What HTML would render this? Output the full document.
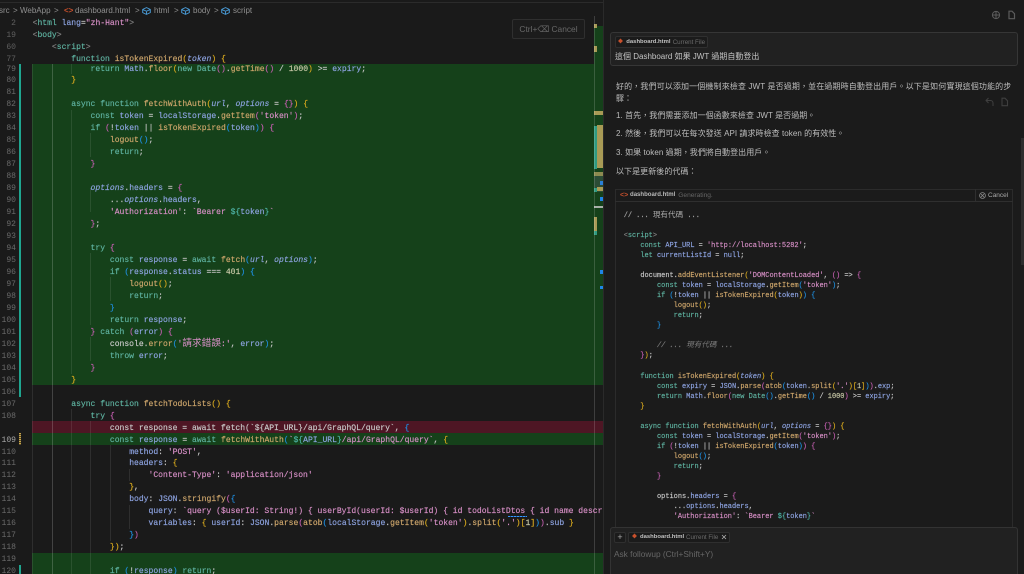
<!DOCTYPE html>
<html lang="zh-Hant"><head><meta charset="utf-8"><title>Editor</title>
<style>
html,body{margin:0;padding:0;background:#1a1a1a}
#app{position:relative;width:1024px;height:574px;overflow:hidden;background:#1a1a1a;filter:blur(.35px);font-family:"Liberation Sans","Noto Sans CJK TC",sans-serif}
.a{position:absolute}
pre{margin:0;position:absolute;font-family:"Liberation Mono","Noto Sans CJK TC",monospace;color:#c8c8c8;white-space:pre;-webkit-text-stroke:.15px}
.main{font-size:8.05px;line-height:11.97px}
.chat{font-size:6.95px;line-height:10.07px}
.nums{left:0;width:16px;text-align:right;color:#6a6a6a;-webkit-text-stroke:0}
.k{color:#5fb3a1}.v{color:#8ea4e2}.f{color:#cfa76c}.s{color:#d78fc6}.c{color:#7d7d7d;font-style:italic}.g{color:#808080}.t{color:#4fb5a8}
.i{font-style:italic}.y{color:#d9aa1e}.m{color:#c45fb0}.b{color:#1f8fe0}.n{color:#c9c9a8}.w{color:#c9c9c9}
.cj{font-size:9.66px;line-height:0;-webkit-text-stroke:0}.cc{font-size:7.6px;line-height:0;-webkit-text-stroke:0}
.chip{border:1px solid #2f2f2f;background:#1b1b1b;border-radius:2px;box-sizing:border-box}
.p{position:absolute;left:616px;font-size:8px;line-height:11.5px;color:#bcbcbc;white-space:nowrap;letter-spacing:.06px}
.gd{position:absolute;width:1px;background:rgba(255,255,255,.09)}
.mm{position:absolute}
</style></head><body><div id="app">

<!-- tabs edge -->
<div class="a" style="left:0;top:2px;width:603px;height:1px;background:#2b2b2b"></div>

<!-- breadcrumb -->
<div class="a" style="left:0;top:4.5px;height:11px;font-size:8px;line-height:11px;color:#8f8f8f;white-space:nowrap;width:300px">
<span class="a" style="left:-1px">src</span><span class="a" style="left:13px">&gt;</span><span class="a" style="left:20px">WebApp</span><span class="a" style="left:54px">&gt;</span><span class="a" style="left:64px;color:#c8502c;font-weight:bold">&lt;&gt;</span><span class="a" style="left:75px">dashboard.html</span><span class="a" style="left:135px">&gt;</span>
<svg class="a" style="left:142px;top:2px" width="9" height="8" viewBox="0 0 9 8" fill="none" stroke="#4b9fdc" stroke-width=".9"><path d="M.7 2.4 4.5.6l3.8 1.8v3.2L4.5 7.4.7 5.6zM.7 2.4l3.8 1.9 3.8-1.9M4.5 4.3v3"/></svg>
<span class="a" style="left:154px">html</span><span class="a" style="left:174px">&gt;</span>
<svg class="a" style="left:181px;top:2px" width="9" height="8" viewBox="0 0 9 8" fill="none" stroke="#4b9fdc" stroke-width=".9"><path d="M.7 2.4 4.5.6l3.8 1.8v3.2L4.5 7.4.7 5.6zM.7 2.4l3.8 1.9 3.8-1.9M4.5 4.3v3"/></svg>
<span class="a" style="left:193px">body</span><span class="a" style="left:214px">&gt;</span>
<svg class="a" style="left:221px;top:2px" width="9" height="8" viewBox="0 0 9 8" fill="none" stroke="#4b9fdc" stroke-width=".9"><path d="M.7 2.4 4.5.6l3.8 1.8v3.2L4.5 7.4.7 5.6zM.7 2.4l3.8 1.9 3.8-1.9M4.5 4.3v3"/></svg>
<span class="a" style="left:233px">script</span>
</div>

<!-- diff backgrounds -->
<div class="a" style="left:32px;top:64px;width:571px;height:321px;background:#15411a"></div>
<div class="a" style="left:32px;top:421px;width:571px;height:12px;background:#4e1624"></div>
<div class="a" style="left:32px;top:433px;width:571px;height:12px;background:#15411a"></div>
<div class="a" style="left:32px;top:553px;width:571px;height:21px;background:#15411a"></div>

<!-- gutter marks -->
<div class="a" style="left:19px;top:64px;width:2px;height:333px;background:#1fa58f"></div>
<div class="a" style="left:19px;top:433px;width:2px;height:12px;background:repeating-linear-gradient(#c9a64e 0 1px,#5a4d26 1px 2px)"></div>
<div class="a" style="left:19px;top:565px;width:2px;height:9px;background:#1fa58f"></div>

<!-- indent guides -->
<div class="gd" style="left:32px;top:64px;height:510px"></div>
<div class="gd" style="left:52px;top:64px;height:510px;background:rgba(255,255,255,.18)"></div>
<div class="gd" style="left:71px;top:64px;height:10px"></div>
<div class="gd" style="left:71px;top:110px;height:264px"></div>
<div class="gd" style="left:71px;top:409px;height:165px"></div>
<div class="gd" style="left:90px;top:133px;height:24px"></div>
<div class="gd" style="left:90px;top:188px;height:24px"></div>
<div class="gd" style="left:90px;top:253px;height:72px"></div>
<div class="gd" style="left:90px;top:337px;height:24px"></div>
<div class="gd" style="left:90px;top:421px;height:153px"></div>
<div class="gd" style="left:110px;top:277px;height:24px"></div>
<div class="gd" style="left:110px;top:445px;height:96px"></div>
<div class="gd" style="left:129px;top:469px;height:12px"></div>
<div class="gd" style="left:129px;top:505px;height:24px"></div>

<!-- minimap -->
<div class="mm" style="left:594px;top:16px;width:9px;height:558px;background:#1a1a1a"></div>
<div class="mm" style="left:594px;top:26px;width:9px;height:359px;background:#15411a"></div>
<div class="mm" style="left:594px;top:421px;width:9px;height:12px;background:#4e1624"></div>
<div class="mm" style="left:594px;top:433px;width:9px;height:12px;background:#15411a"></div>
<div class="mm" style="left:594px;top:553px;width:9px;height:21px;background:#15411a"></div>
<div class="mm" style="left:594px;top:24px;width:3px;height:4px;background:#a89a55"></div>
<div class="mm" style="left:594px;top:46px;width:3px;height:6px;background:#a89a55"></div>
<div class="mm" style="left:594px;top:111px;width:9px;height:4px;background:#a89a55"></div>
<div class="mm" style="left:594px;top:126px;width:3px;height:43px;background:#2f9a80"></div>
<div class="mm" style="left:597px;top:125px;width:6px;height:43px;background:#a89a55"></div>
<div class="mm" style="left:594px;top:172px;width:9px;height:4px;background:#8d8a50"></div>
<div class="mm" style="left:594px;top:176px;width:9px;height:16px;background:#2c4c36"></div>
<div class="mm" style="left:600px;top:181px;width:3px;height:4px;background:#2a80d8"></div>
<div class="mm" style="left:597px;top:187px;width:6px;height:4px;background:#a89a55"></div>
<div class="mm" style="left:594px;top:188px;width:3px;height:4px;background:#2f9a80"></div>
<div class="mm" style="left:600px;top:197px;width:3px;height:4px;background:#1f86e8"></div>
<div class="mm" style="left:594px;top:206px;width:9px;height:1.5px;background:#a8b0a8"></div>
<div class="mm" style="left:594px;top:217px;width:3px;height:14px;background:#a89a55"></div>
<div class="mm" style="left:594px;top:231px;width:3px;height:4px;background:#2f9a80"></div>
<div class="mm" style="left:600px;top:270px;width:3px;height:4px;background:#1f86e8"></div>
<div class="mm" style="left:600px;top:286px;width:3px;height:3px;background:#1f86e8"></div>
<div class="a" style="left:594px;top:16px;width:1px;height:558px;background:rgba(255,255,255,.16)"></div>

<!-- sticky -->
<pre class="main nums" style="top:18px;color:#5f5f5f">2
19
60
77</pre>
<pre class="main" style="left:32.6px;top:18px"><span class="g">&lt;</span><span class="k">html</span> <span class="v">lang</span>=<span class="s">"zh-Hant"</span><span class="g">&gt;</span>
<span class="g">&lt;</span><span class="k">body</span><span class="g">&gt;</span>
    <span class="g">&lt;</span><span class="k">script</span><span class="g">&gt;</span>
        <span class="k">function</span> <span class="f">isTokenExpired</span><span class="y">(</span><span class="v i">token</span><span class="y">)</span> <span class="y">{</span></pre>

<!-- line numbers -->
<pre class="main nums" style="top:63.5px">79
80
81
82
83
84
85
86
87
88
89
90
91
92
93
94
95
96
97
98
99
100
101
102
103
104
105
106
107
108

<span style="color:#a8a8a8">109</span>
110
111
112
113
114
115
116
117
118
119
120</pre>

<!-- code -->
<div class="a" style="left:32px;top:64px;width:571px;height:510px;overflow:hidden">
<pre class="main" style="left:.6px;top:-.5px">            <span class="k">return</span> <span class="v">Math</span>.<span class="f">floor</span><span class="y">(</span><span class="k">new</span> <span class="k">Date</span><span class="m">()</span>.<span class="f">getTime</span><span class="m">()</span> / <span class="n">1000</span><span class="y">)</span> &gt;= <span class="v">expiry</span>;
        <span class="y">}</span>

        <span class="k">async</span> <span class="k">function</span> <span class="f">fetchWithAuth</span><span class="y">(</span><span class="v i">url</span>, <span class="v i">options</span> = <span class="m">{}</span><span class="y">)</span> <span class="y">{</span>
            <span class="k">const</span> <span class="v">token</span> = <span class="v">localStorage</span>.<span class="f">getItem</span><span class="m">(</span><span class="s">'token'</span><span class="m">)</span>;
            <span class="k">if</span> <span class="m">(</span>!<span class="v">token</span> || <span class="f">isTokenExpired</span><span class="b">(</span><span class="v">token</span><span class="b">)</span><span class="m">)</span> <span class="m">{</span>
                <span class="f">logout</span><span class="b">()</span>;
                <span class="k">return</span>;
            <span class="m">}</span>

            <span class="v i">options</span>.<span class="v">headers</span> = <span class="m">{</span>
                ...<span class="v i">options</span>.<span class="v">headers</span>,
                <span class="s">'Authorization'</span>: <span class="s">`Bearer </span><span class="t">${</span><span class="v">token</span><span class="t">}</span><span class="s">`</span>
            <span class="m">}</span>;

            <span class="k">try</span> <span class="m">{</span>
                <span class="k">const</span> <span class="v">response</span> = <span class="k">await</span> <span class="f">fetch</span><span class="b">(</span><span class="v i">url</span>, <span class="v i">options</span><span class="b">)</span>;
                <span class="k">if</span> <span class="b">(</span><span class="v">response</span>.<span class="v">status</span> === <span class="n">401</span><span class="b">)</span> <span class="b">{</span>
                    <span class="f">logout</span><span class="y">()</span>;
                    <span class="k">return</span>;
                <span class="b">}</span>
                <span class="k">return</span> <span class="v">response</span>;
            <span class="m">}</span> <span class="k">catch</span> <span class="m">(</span><span class="v">error</span><span class="m">)</span> <span class="m">{</span>
                <span class="w">console</span>.<span class="f">error</span><span class="b">(</span><span class="s">'<span class="cj">請求錯誤</span>:'</span>, <span class="v">error</span><span class="b">)</span>;
                <span class="k">throw</span> <span class="v">error</span>;
            <span class="m">}</span>
        <span class="y">}</span>

        <span class="k">async</span> <span class="k">function</span> <span class="f">fetchTodoLists</span><span class="y">()</span> <span class="y">{</span>
            <span class="k">try</span> <span class="m">{</span>
                <span class="w">const response = await fetch(`${API_URL}/api/GraphQL/query`, </span><span class="b">{</span>
                <span class="k">const</span> <span class="v">response</span> = <span class="k">await</span> <span class="f">fetchWithAuth</span><span class="b">(</span><span class="s">`</span><span class="t">${</span><span class="v">API_URL</span><span class="t">}</span><span class="s">/api/GraphQL/query`</span>, <span class="y">{</span>
                    <span class="v">method</span>: <span class="s">'POST'</span>,
                    <span class="v">headers</span>: <span class="y">{</span>
                        <span class="s">'Content-Type'</span>: <span class="s">'application/json'</span>
                    <span class="y">}</span>,
                    <span class="v">body</span>: <span class="v">JSON</span>.<span class="f">stringify</span><span class="m">(</span><span class="b">{</span>
                        <span class="v">query</span>: <span class="s">`query ($userId: String!) { userById(userId: $userId) { id todoListDtos { id name descr</span>
                        <span class="v">variables</span>: <span class="y">{</span> <span class="v">userId</span>: <span class="v">JSON</span>.<span class="f">parse</span><span class="m">(</span><span class="f">atob</span><span class="b">(</span><span class="v">localStorage</span>.<span class="f">getItem</span><span class="y">(</span><span class="s">'token'</span><span class="y">)</span>.<span class="f">split</span><span class="y">(</span><span class="s">'.'</span><span class="y">)</span><span class="y">[</span><span class="n">1</span><span class="y">]</span><span class="b">)</span><span class="m">)</span>.<span class="v">sub</span> <span class="y">}</span>
                    <span class="b">}</span><span class="m">)</span>
                <span class="y">}</span><span class="y">)</span>;

                <span class="k">if</span> <span class="b">(</span>!<span class="v">response</span><span class="b">)</span> <span class="k">return</span>;</pre>
</div>
<div class="a" style="left:508px;top:515.5px;width:19px;height:1px;background:repeating-linear-gradient(90deg,#3794ff 0 2px,#1a5a90 2px 3px)"></div>

<!-- cancel overlay -->
<div class="a" style="left:512px;top:19px;width:73px;height:20px;box-sizing:border-box;border:1px solid #2f2f2f;border-radius:2px;background:#1c1c1c;color:#686868;font-size:8.4px;line-height:18px;text-align:center;white-space:nowrap">Ctrl+⌫ Cancel</div>

<!-- right panel -->
<div class="a" style="left:603px;top:0;width:421px;height:574px;background:#1b1b1b;border-left:1px solid #2a2a2a;box-sizing:border-box"></div>

<svg class="a" style="left:991px;top:10px" width="10" height="10" viewBox="0 0 10 10" fill="none" stroke="#5c5c5c" stroke-width="1"><circle cx="5" cy="5" r="3.6"/><path d="M5 1.5v7M1.5 5h7"/></svg>
<svg class="a" style="left:1007px;top:10px" width="9" height="10" viewBox="0 0 9 10" fill="none" stroke="#5c5c5c" stroke-width="1.2"><path d="M2 1.2h3l2.5 2.5v5H2z"/></svg>

<!-- user message -->
<div class="a" style="left:610px;top:32px;width:408px;height:34px;box-sizing:border-box;background:#212121;border:1px solid #363636;border-radius:3px"></div>
<div class="a chip" style="left:615px;top:36px;width:93px;height:12px"></div>
<div class="a" style="left:618px;top:40px;color:#c8502c;font-size:5px;line-height:4px;font-weight:bold">◆</div>
<div class="a" style="left:626.3px;top:37px;font-size:5.9px;line-height:11px;color:#c0c0c0;font-weight:bold;white-space:nowrap">dashboard.html</div>
<div class="a" style="left:672.7px;top:37px;font-size:6.2px;line-height:11px;color:#6c6c6c;white-space:nowrap">Current File</div>
<div class="a" style="left:615px;top:50.5px;font-size:8px;line-height:12px;color:#c4c4c4;white-space:nowrap">這個 Dashboard 如果 JWT 過期自動登出</div>

<!-- response -->
<div class="p" style="top:81px;letter-spacing:.13px">好的，我們可以添加一個機制來檢查 JWT 是否過期，並在過期時自動登出用戶。以下是如何實現這個功能的步</div>
<div class="p" style="top:92.5px">驟：</div>
<svg class="a" style="left:985px;top:97px" width="9" height="10" viewBox="0 0 9 10" fill="none" stroke="#3f3f3f" stroke-width="1"><path d="M3.5 1 1 3.5 3.5 6M1 3.5h4.5A2.5 2.5 0 0 1 8 6v3"/></svg>
<svg class="a" style="left:1000px;top:97px" width="9" height="10" viewBox="0 0 9 10" fill="none" stroke="#3f3f3f" stroke-width="1.1"><path d="M2 1.2h3l2.5 2.5v5H2z"/></svg>
<div class="p" style="top:110px">1. 首先，我們需要添加一個函數來檢查 JWT 是否過期。</div>
<div class="p" style="top:128px">2. 然後，我們可以在每次發送 API 請求時檢查 token 的有效性。</div>
<div class="p" style="top:147px">3. 如果 token 過期，我們將自動登出用戶。</div>
<div class="p" style="top:166px">以下是更新後的代碼：</div>

<!-- code block -->
<div class="a" style="left:615px;top:189px;width:398px;height:340px;box-sizing:border-box;border:1px solid #2b2b2b;border-bottom:0"></div>
<div class="a" style="left:615px;top:201px;width:398px;height:1px;background:#2f2f2f"></div>
<div class="a" style="left:975px;top:189px;width:1px;height:12px;background:#2f2f2f"></div>
<div class="a" style="left:620px;top:190px;font-size:7px;line-height:11px;font-weight:bold;color:#c8502c;white-space:nowrap">&lt;&gt;</div>
<div class="a" style="left:630px;top:190px;font-size:6.05px;line-height:11px;font-weight:bold;color:#b8b8b8;white-space:nowrap">dashboard.html</div>
<div class="a" style="left:678.3px;top:190px;font-size:6.6px;line-height:11px;color:#666;white-space:nowrap">Generating.</div>
<svg class="a" style="left:979px;top:192px" width="7" height="7" viewBox="0 0 7 7" fill="none" stroke="#8a8a8a" stroke-width=".8"><circle cx="3.5" cy="3.5" r="2.9"/><path d="m2 2 3 3M5 2 2 5"/></svg>
<div class="a" style="left:988px;top:190px;font-size:6.5px;line-height:11px;color:#a8a8a8;white-space:nowrap">Cancel</div>

<div class="a" style="left:616px;top:203px;width:396px;height:319px;overflow:hidden">
<pre class="chat" style="left:7.7px;top:7.5px"><span style="color:#a8a8a8">// ... <span class="cc">現有代碼</span> ...</span>

<span class="g">&lt;</span><span class="k">script</span><span class="g">&gt;</span>
    <span class="k">const</span> <span class="v">API_URL</span> = <span class="s">'http://localhost:5282'</span>;
    <span class="k">let</span> <span class="v">currentListId</span> = <span class="v">null</span>;

    <span class="w">document</span>.<span class="f">addEventListener</span><span class="y">(</span><span class="s">'DOMContentLoaded'</span>, <span class="m">()</span> =&gt; <span class="m">{</span>
        <span class="k">const</span> <span class="v">token</span> = <span class="v">localStorage</span>.<span class="f">getItem</span><span class="b">(</span><span class="s">'token'</span><span class="b">)</span>;
        <span class="k">if</span> <span class="b">(</span>!<span class="v">token</span> || <span class="f">isTokenExpired</span><span class="y">(</span><span class="v">token</span><span class="y">)</span><span class="b">)</span> <span class="b">{</span>
            <span class="f">logout</span><span class="y">()</span>;
            <span class="k">return</span>;
        <span class="b">}</span>

        <span class="c">// ... <span class="cc">現有代碼</span> ...</span>
    <span class="m">}</span><span class="y">)</span>;

    <span class="k">function</span> <span class="f">isTokenExpired</span><span class="y">(</span><span class="v i">token</span><span class="y">)</span> <span class="y">{</span>
        <span class="k">const</span> <span class="v">expiry</span> = <span class="v">JSON</span>.<span class="f">parse</span><span class="m">(</span><span class="f">atob</span><span class="b">(</span><span class="v">token</span>.<span class="f">split</span><span class="y">(</span><span class="s">'.'</span><span class="y">)</span><span class="y">[</span><span class="n">1</span><span class="y">]</span><span class="b">)</span><span class="m">)</span>.<span class="v">exp</span>;
        <span class="k">return</span> <span class="v">Math</span>.<span class="f">floor</span><span class="m">(</span><span class="k">new</span> <span class="k">Date</span><span class="b">()</span>.<span class="f">getTime</span><span class="b">()</span> / <span class="n">1000</span><span class="m">)</span> &gt;= <span class="v">expiry</span>;
    <span class="y">}</span>

    <span class="k">async</span> <span class="k">function</span> <span class="f">fetchWithAuth</span><span class="y">(</span><span class="v i">url</span>, <span class="v i">options</span> = <span class="m">{}</span><span class="y">)</span> <span class="y">{</span>
        <span class="k">const</span> <span class="v">token</span> = <span class="v">localStorage</span>.<span class="f">getItem</span><span class="m">(</span><span class="s">'token'</span><span class="m">)</span>;
        <span class="k">if</span> <span class="m">(</span>!<span class="v">token</span> || <span class="f">isTokenExpired</span><span class="b">(</span><span class="v">token</span><span class="b">)</span><span class="m">)</span> <span class="m">{</span>
            <span class="f">logout</span><span class="b">()</span>;
            <span class="k">return</span>;
        <span class="m">}</span>

        <span class="w">options</span>.<span class="v">headers</span> = <span class="m">{</span>
            ...<span class="v">options</span>.<span class="v">headers</span>,
            <span class="s">'Authorization'</span>: <span class="s">`Bearer </span><span class="t">${</span><span class="v">token</span><span class="t">}</span><span class="s">`</span></pre>
</div>

<!-- scrollbar -->
<div class="a" style="left:1021px;top:138px;width:3px;height:127px;background:#2d2d2d"></div>

<!-- input -->
<div class="a" style="left:610px;top:527px;width:408px;height:50px;box-sizing:border-box;background:#212121;border:1px solid #333;border-radius:3px"></div>
<div class="a chip" style="left:614px;top:532px;width:12px;height:11px;text-align:center;font-size:9px;line-height:9px;color:#aaa">+</div>
<div class="a chip" style="left:628px;top:532px;width:102px;height:11px"></div>
<div class="a" style="left:632px;top:535px;color:#c8502c;font-size:5px;line-height:4px;font-weight:bold">◆</div>
<div class="a" style="left:640px;top:532px;font-size:5.9px;line-height:11px;color:#c0c0c0;font-weight:bold;white-space:nowrap">dashboard.html</div>
<div class="a" style="left:686px;top:532px;font-size:6.2px;line-height:11px;color:#6c6c6c;white-space:nowrap">Current File</div>
<svg class="a" style="left:721px;top:534px" width="6" height="6" viewBox="0 0 6 6" stroke="#b0b0b0" stroke-width=".8"><path d="m1 1 4 4M5 1 1 5"/></svg>
<div class="a" style="left:614px;top:548px;font-size:8.3px;line-height:12px;color:#666;white-space:nowrap">Ask followup (Ctrl+Shift+Y)</div>

</div></body></html>
